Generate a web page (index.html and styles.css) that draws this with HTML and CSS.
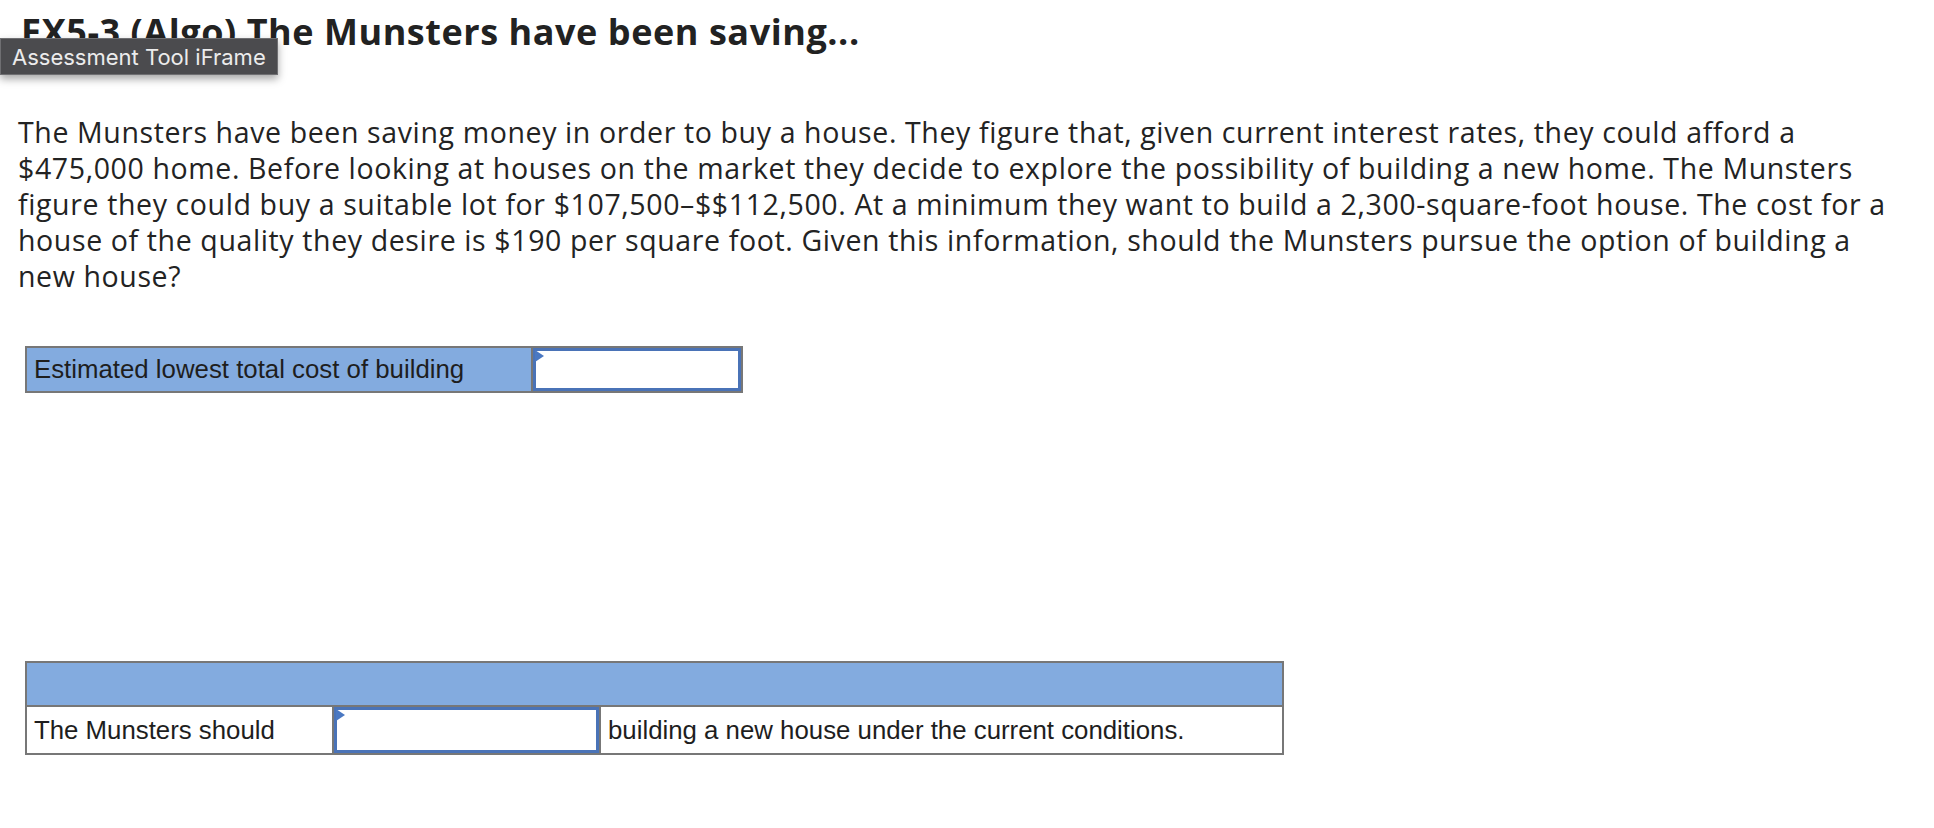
FILE: index.html
```html
<!DOCTYPE html>
<html lang="en">
<head>
<meta charset="utf-8">
<title>EX5-3 (Algo) The Munsters have been saving...</title>
<link rel="stylesheet" href="styles.css">
</head>
<body>
<div class="page">
  <h1 class="title">EX5-3 (Algo) The Munsters have been saving...</h1>
  <div class="tooltip">Assessment Tool iFrame</div>
  <p class="question">The Munsters have been saving money in order to buy a house. They figure that, given current interest rates, they could afford a $475,000 home. Before looking at houses on the market they decide to explore the possibility of building a new home. The Munsters figure they could buy a suitable lot for $107,500–$$112,500. At a minimum they want to build a 2,300-square-foot house. The cost for a house of the quality they desire is $190 per square foot. Given this information, should the Munsters pursue the option of building a new house?</p>

  <table class="grid grid-cost">
    <tr>
      <td class="cell label">Estimated lowest total cost of building</td>
      <td class="cell entry"><div class="input"><span class="flag"></span></div></td>
    </tr>
  </table>

  <table class="grid grid-choice">
    <tr class="head-row">
      <td class="cell head" colspan="3"></td>
    </tr>
    <tr>
      <td class="cell text col-a">The Munsters should</td>
      <td class="cell entry col-b"><div class="input input-tall"><span class="flag"></span></div></td>
      <td class="cell text col-c">building a new house under the current conditions.</td>
    </tr>
  </table>
</div>
</body>
</html>
```

FILE: styles.css
```css
html, body {
  margin: 0;
  padding: 0;
  background: #ffffff;
}

.page {
  position: relative;
  width: 1882px;
  padding: 10px 0 0 18px;
  font-family: "Open Sans", "Lato", sans-serif;
  color: #232323;
}

.title {
  margin: 0 0 0 3px;
  font-size: 36px;
  letter-spacing: 0.55px;
  line-height: 44px;
  font-weight: 700;
  color: #222222;
  white-space: nowrap;
}

.tooltip {
  position: absolute;
  left: 0;
  top: 38px;
  width: 278px;
  height: 37px;
  box-sizing: border-box;
  padding-left: 11px;
  display: flex;
  align-items: center;
  background: #4b4b4e;
  border: 1px solid #6f6f72;
  box-shadow: 0 4px 8px rgba(0, 0, 0, 0.35);
  color: #ececec;
  font-family: "Inter", "Liberation Sans", sans-serif;
  font-size: 22px;
  white-space: nowrap;
}

.question {
  margin: 60px 0 0 0;
  font-size: 28.5px;
  letter-spacing: 0.62px;
  line-height: 36px;
}

.grid {
  border-collapse: collapse;
  margin-left: 7px;
  font-family: "Liberation Sans", Arial, sans-serif;
  font-size: 25.8px;
  color: #1e1e1e;
}

.cell {
  border: 2px solid #777777;
  padding: 0;
}

.grid-cost {
  margin-top: 52px;
  width: 718px;
}

.grid-cost .cell {
  height: 43px;
}

.grid-cost .label {
  width: 497px;
  background: #83abdf;
  padding-left: 7px;
}

.grid-choice {
  margin-top: 268px;
  width: 1259px;
}

.grid-choice .head {
  height: 42px;
  background: #83abdf;
}

.grid-choice .text {
  height: 46px;
  padding-left: 7px;
  background: #ffffff;
}

.col-a {
  width: 298px;
}

.col-b {
  width: 265px;
}

.entry {
  background: #ffffff;
  vertical-align: top;
}

.input {
  position: relative;
  box-sizing: border-box;
  height: 43px;
  border: 3px solid #4a73b7;
  background: #ffffff;
}

.input-tall {
  height: 46px;
}

.flag {
  position: absolute;
  left: -1px;
  top: -1px;
  width: 0;
  height: 0;
  border-left: 9px solid #4a78c2;
  border-top: 6px solid transparent;
  border-bottom: 6px solid transparent;
}
```
